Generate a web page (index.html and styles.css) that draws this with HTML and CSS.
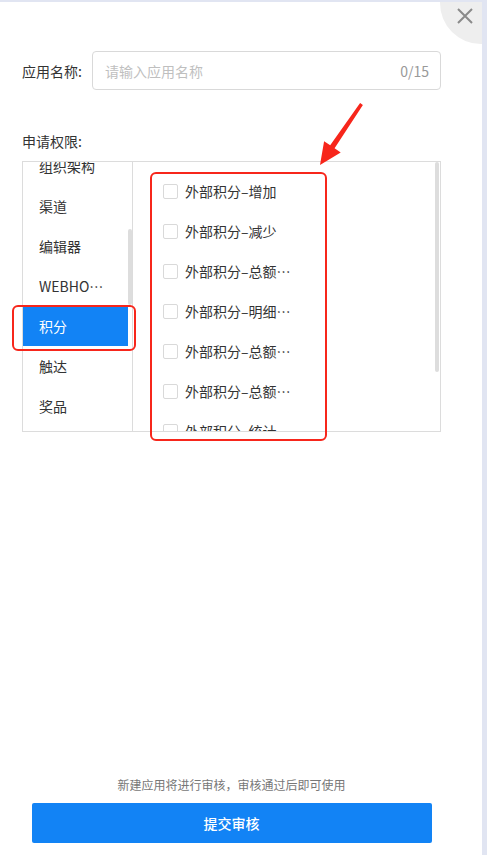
FILE: index.html
```html
<!DOCTYPE html>
<html lang="zh-CN">
<head>
    <meta charset="UTF-8">
    <meta name="viewport" content="width=device-width, initial-scale=1.0">
    <title>新建应用</title>
    <link rel="stylesheet" href="styles.css">
</head>
<body>
    <div class="drawer">
        <div class="close-btn">
            <svg width="16" height="16" viewBox="0 0 16 16"><path d="M1 1L15 15M15 1L1 15" stroke="#8a8a8a" stroke-width="2" fill="none"/></svg>
        </div>

        <div class="form">
            <div class="field">
                <label class="field-label">应用名称:</label>
                <div class="input">
                    <span class="placeholder">请输入应用名称</span>
                    <span class="counter">0/15</span>
                </div>
            </div>

            <div class="perm-label">申请权限:</div>
            <div class="perm-box">
                <div class="cat-col">
                    <div class="cat-list">
                        <div class="cat-item">组织架构</div>
                        <div class="cat-item">渠道</div>
                        <div class="cat-item">编辑器</div>
                        <div class="cat-item">WEBHOOK</div>
                        <div class="cat-item active">积分</div>
                        <div class="cat-item">触达</div>
                        <div class="cat-item">奖品</div>
                    </div>
                    <div class="track"><div class="thumb cat-thumb"></div></div>
                </div>
                <div class="perm-col">
                    <div class="perm-list">
                        <div class="perm-item"><span class="checkbox"></span><span class="perm-text">外部积分–增加</span></div>
                        <div class="perm-item"><span class="checkbox"></span><span class="perm-text">外部积分–减少</span></div>
                        <div class="perm-item"><span class="checkbox"></span><span class="perm-text">外部积分–总额查询</span></div>
                        <div class="perm-item"><span class="checkbox"></span><span class="perm-text">外部积分–明细查询</span></div>
                        <div class="perm-item"><span class="checkbox"></span><span class="perm-text">外部积分–总额统计</span></div>
                        <div class="perm-item"><span class="checkbox"></span><span class="perm-text">外部积分–总额导出</span></div>
                        <div class="perm-item"><span class="checkbox"></span><span class="perm-text">外部积分–统计</span></div>
                    </div>
                    <div class="track"><div class="thumb perm-thumb"></div></div>
                </div>
            </div>
        </div>

        <div class="footer">
            <p class="tip">新建应用将进行审核，审核通过后即可使用</p>
            <button class="submit">提交审核</button>
        </div>

        <!-- 标注 -->
        <div class="mark mark-cat"></div>
        <div class="mark mark-perm"></div>
        <svg class="arrow" width="487" height="200" viewBox="0 0 487 200">
            <polygon points="362.9,104.9 334.6,148.3 340.7,152.4 320,165 324.1,141.2 330.2,145.3 360.1,103.1" fill="#f7261b"/>
        </svg>
    </div>
</body>
</html>
```

FILE: styles.css
```css
* { box-sizing: border-box; }
body { margin: 0; background: #e1e5f2; font-family: "Noto Sans CJK SC", "Noto Sans", sans-serif; font-size: 14px; color: #333; }
.drawer { position: relative; width: 482px; height: 853px; margin-top: 2px; background: #fff; overflow: hidden; display: flex; flex-direction: column; padding: 49px 0 12px 22px; }

.close-btn { position: absolute; top: -40px; right: -40px; width: 82px; height: 82px; border-radius: 50%; background: #eeeeee; }
.close-btn svg { position: absolute; left: 17px; top: 46px; }

.form { width: 419px; }
.field { display: flex; align-items: center; gap: 10px; }
.field-label { line-height: 20px; white-space: nowrap; }
.input { flex: 1; height: 39px; border: 1px solid #d9d9d9; border-radius: 4px; display: flex; align-items: center; justify-content: space-between; padding: 0 11px 0 12px; }
.placeholder { color: #bfbfbf; }
.counter { color: #999; }

.perm-label { margin-top: 41px; line-height: 20px; }
.perm-box { margin-top: 10px; height: 271px; border: 1px solid #dcdcdc; display: flex; overflow: hidden; }

.cat-col { width: 110px; border-right: 1px solid #dcdcdc; display: flex; }
.cat-list { flex: 1; min-width: 0; margin-top: -16px; }
.cat-item { height: 40px; line-height: 40px; padding: 0 24px 0 16px; white-space: nowrap; overflow: hidden; text-overflow: ellipsis; }
.cat-item.active { background: #1283f5; color: #fff; }

.track { width: 4px; flex-shrink: 0; }
.thumb { background: #dddddd; border-radius: 2px; }
.cat-thumb { margin-top: 67px; height: 76px; }
.perm-thumb { height: 210px; }

.perm-col { flex: 1; display: flex; padding-right: 1px; }
.perm-list { flex: 1; padding: 9px 0 0 30px; }
.perm-item { height: 40px; display: flex; align-items: center; gap: 7px; }
.checkbox { width: 15px; height: 15px; border: 1px solid #d9d9d9; border-radius: 2px; flex-shrink: 0; }
.perm-text { max-width: 106px; white-space: nowrap; overflow: hidden; text-overflow: ellipsis; }

.footer { margin-top: auto; width: 419px; display: flex; flex-direction: column; align-items: center; }
.tip { margin: 0 0 8px; font-size: 12px; line-height: 20px; color: #777; }
.submit { width: 400px; height: 40px; border: none; border-radius: 2px; background: #1283f5; color: #fff; font-family: inherit; font-size: 14px; font-weight: 500; cursor: pointer; }

.mark { position: absolute; border: 2.5px solid #f7261b; border-radius: 6px; }
.mark-cat { left: 12px; top: 303px; width: 124px; height: 46px; }
.mark-perm { left: 150px; top: 170px; width: 177px; height: 269px; }
.arrow { position: absolute; left: 0; top: -2px; pointer-events: none; }
```
